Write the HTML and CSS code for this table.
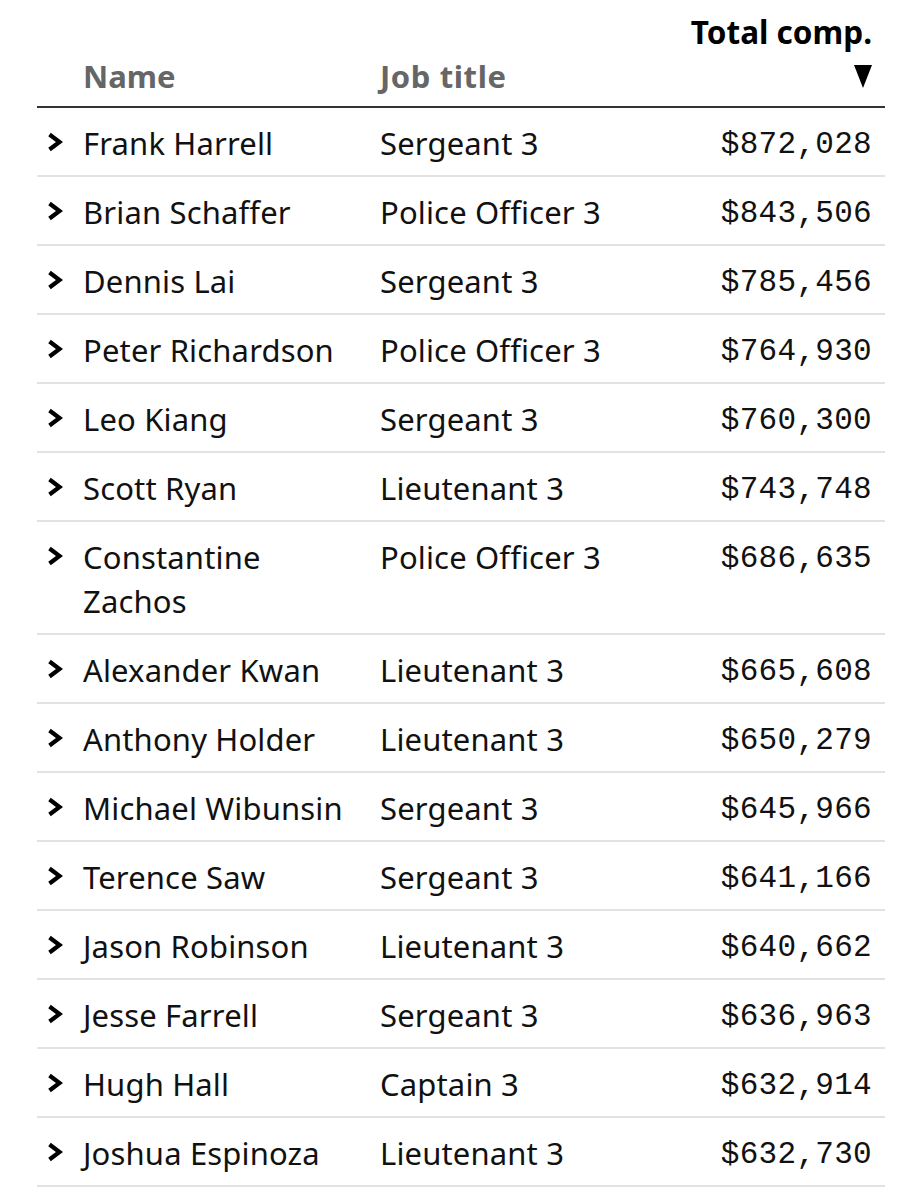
FILE: index.html
```html
<!DOCTYPE html>
<html lang="en">
<head>
<meta charset="utf-8">
<title>Total compensation</title>
<link rel="stylesheet" href="styles.css">
</head>
<body>
<div class="table">
  <div class="head">
    <div class="hcell"></div>
    <div class="hcell hname">Name</div>
    <div class="hcell htitle">Job title</div>
    <div class="hcell hcomp">Total comp.<br><svg class="tri" width="18" height="23" viewBox="0 0 18 23"><polygon points="0,0 18,0 9,23" fill="#000"/></svg></div>
  </div>
  <div class="row"><div class="chev"><svg width="16" height="20" viewBox="0 0 16 20"><polyline points="2.5,2.5 12.5,10 2.5,17.5" fill="none" stroke="#000" stroke-width="4.2"/></svg></div><div class="name">Frank Harrell</div><div class="title">Sergeant 3</div><div class="comp">$872,028</div></div>
  <div class="row"><div class="chev"><svg width="16" height="20" viewBox="0 0 16 20"><polyline points="2.5,2.5 12.5,10 2.5,17.5" fill="none" stroke="#000" stroke-width="4.2"/></svg></div><div class="name">Brian Schaffer</div><div class="title">Police Officer 3</div><div class="comp">$843,506</div></div>
  <div class="row"><div class="chev"><svg width="16" height="20" viewBox="0 0 16 20"><polyline points="2.5,2.5 12.5,10 2.5,17.5" fill="none" stroke="#000" stroke-width="4.2"/></svg></div><div class="name">Dennis Lai</div><div class="title">Sergeant 3</div><div class="comp">$785,456</div></div>
  <div class="row"><div class="chev"><svg width="16" height="20" viewBox="0 0 16 20"><polyline points="2.5,2.5 12.5,10 2.5,17.5" fill="none" stroke="#000" stroke-width="4.2"/></svg></div><div class="name">Peter Richardson</div><div class="title">Police Officer 3</div><div class="comp">$764,930</div></div>
  <div class="row"><div class="chev"><svg width="16" height="20" viewBox="0 0 16 20"><polyline points="2.5,2.5 12.5,10 2.5,17.5" fill="none" stroke="#000" stroke-width="4.2"/></svg></div><div class="name">Leo Kiang</div><div class="title">Sergeant 3</div><div class="comp">$760,300</div></div>
  <div class="row"><div class="chev"><svg width="16" height="20" viewBox="0 0 16 20"><polyline points="2.5,2.5 12.5,10 2.5,17.5" fill="none" stroke="#000" stroke-width="4.2"/></svg></div><div class="name">Scott Ryan</div><div class="title">Lieutenant 3</div><div class="comp">$743,748</div></div>
  <div class="row"><div class="chev"><svg width="16" height="20" viewBox="0 0 16 20"><polyline points="2.5,2.5 12.5,10 2.5,17.5" fill="none" stroke="#000" stroke-width="4.2"/></svg></div><div class="name">Constantine Zachos</div><div class="title">Police Officer 3</div><div class="comp">$686,635</div></div>
  <div class="row"><div class="chev"><svg width="16" height="20" viewBox="0 0 16 20"><polyline points="2.5,2.5 12.5,10 2.5,17.5" fill="none" stroke="#000" stroke-width="4.2"/></svg></div><div class="name">Alexander Kwan</div><div class="title">Lieutenant 3</div><div class="comp">$665,608</div></div>
  <div class="row"><div class="chev"><svg width="16" height="20" viewBox="0 0 16 20"><polyline points="2.5,2.5 12.5,10 2.5,17.5" fill="none" stroke="#000" stroke-width="4.2"/></svg></div><div class="name">Anthony Holder</div><div class="title">Lieutenant 3</div><div class="comp">$650,279</div></div>
  <div class="row"><div class="chev"><svg width="16" height="20" viewBox="0 0 16 20"><polyline points="2.5,2.5 12.5,10 2.5,17.5" fill="none" stroke="#000" stroke-width="4.2"/></svg></div><div class="name">Michael Wibunsin</div><div class="title">Sergeant 3</div><div class="comp">$645,966</div></div>
  <div class="row"><div class="chev"><svg width="16" height="20" viewBox="0 0 16 20"><polyline points="2.5,2.5 12.5,10 2.5,17.5" fill="none" stroke="#000" stroke-width="4.2"/></svg></div><div class="name">Terence Saw</div><div class="title">Sergeant 3</div><div class="comp">$641,166</div></div>
  <div class="row"><div class="chev"><svg width="16" height="20" viewBox="0 0 16 20"><polyline points="2.5,2.5 12.5,10 2.5,17.5" fill="none" stroke="#000" stroke-width="4.2"/></svg></div><div class="name">Jason Robinson</div><div class="title">Lieutenant 3</div><div class="comp">$640,662</div></div>
  <div class="row"><div class="chev"><svg width="16" height="20" viewBox="0 0 16 20"><polyline points="2.5,2.5 12.5,10 2.5,17.5" fill="none" stroke="#000" stroke-width="4.2"/></svg></div><div class="name">Jesse Farrell</div><div class="title">Sergeant 3</div><div class="comp">$636,963</div></div>
  <div class="row"><div class="chev"><svg width="16" height="20" viewBox="0 0 16 20"><polyline points="2.5,2.5 12.5,10 2.5,17.5" fill="none" stroke="#000" stroke-width="4.2"/></svg></div><div class="name">Hugh Hall</div><div class="title">Captain 3</div><div class="comp">$632,914</div></div>
  <div class="row"><div class="chev"><svg width="16" height="20" viewBox="0 0 16 20"><polyline points="2.5,2.5 12.5,10 2.5,17.5" fill="none" stroke="#000" stroke-width="4.2"/></svg></div><div class="name">Joshua Espinoza</div><div class="title">Lieutenant 3</div><div class="comp">$632,730</div></div>
</div>
</body>
</html>
```

FILE: styles.css
```css
html, body {
  margin: 0;
  padding: 0;
  background: #fff;
}
body {
  font-family: "Noto Sans", "Open Sans", sans-serif;
  color: #111;
}
.table {
  margin-left: 37px;
  width: 848px;
}
.head, .row {
  display: grid;
  grid-template-columns: 46px 297px 1fr auto;
}
.head {
  align-items: end;
  padding-top: 11px;
  padding-bottom: 11px;
  border-bottom: 2.5px solid #333;
  font-size: 31px;
  font-weight: 700;
  line-height: 42px;
}
.hname, .htitle {
  color: #666;
  margin-bottom: -2px;
}
.htitle {
  letter-spacing: 0.6px;
}
.hcomp {
  text-align: right;
  padding-right: 13px;
  color: #000;
  font-size: 31.5px;
}
.tri {
  vertical-align: -2px;
}
.row {
  border-bottom: 2px solid #e2e2e2;
  padding: 13px 0 10px;
  font-size: 31px;
  line-height: 44px;
  letter-spacing: 0.15px;
}
.chev {
  height: 41px;
  display: flex;
  align-items: center;
  padding-left: 10px;
}
.chev svg {
  display: block;
}
.name {
  padding-right: 30px;
}
.comp {
  text-align: right;
  padding-right: 13px;
  padding-top: 4.5px;
  line-height: 38px;
  font-family: "Liberation Mono", monospace;
  font-size: 31px;
  letter-spacing: 0.3px;
}
```
